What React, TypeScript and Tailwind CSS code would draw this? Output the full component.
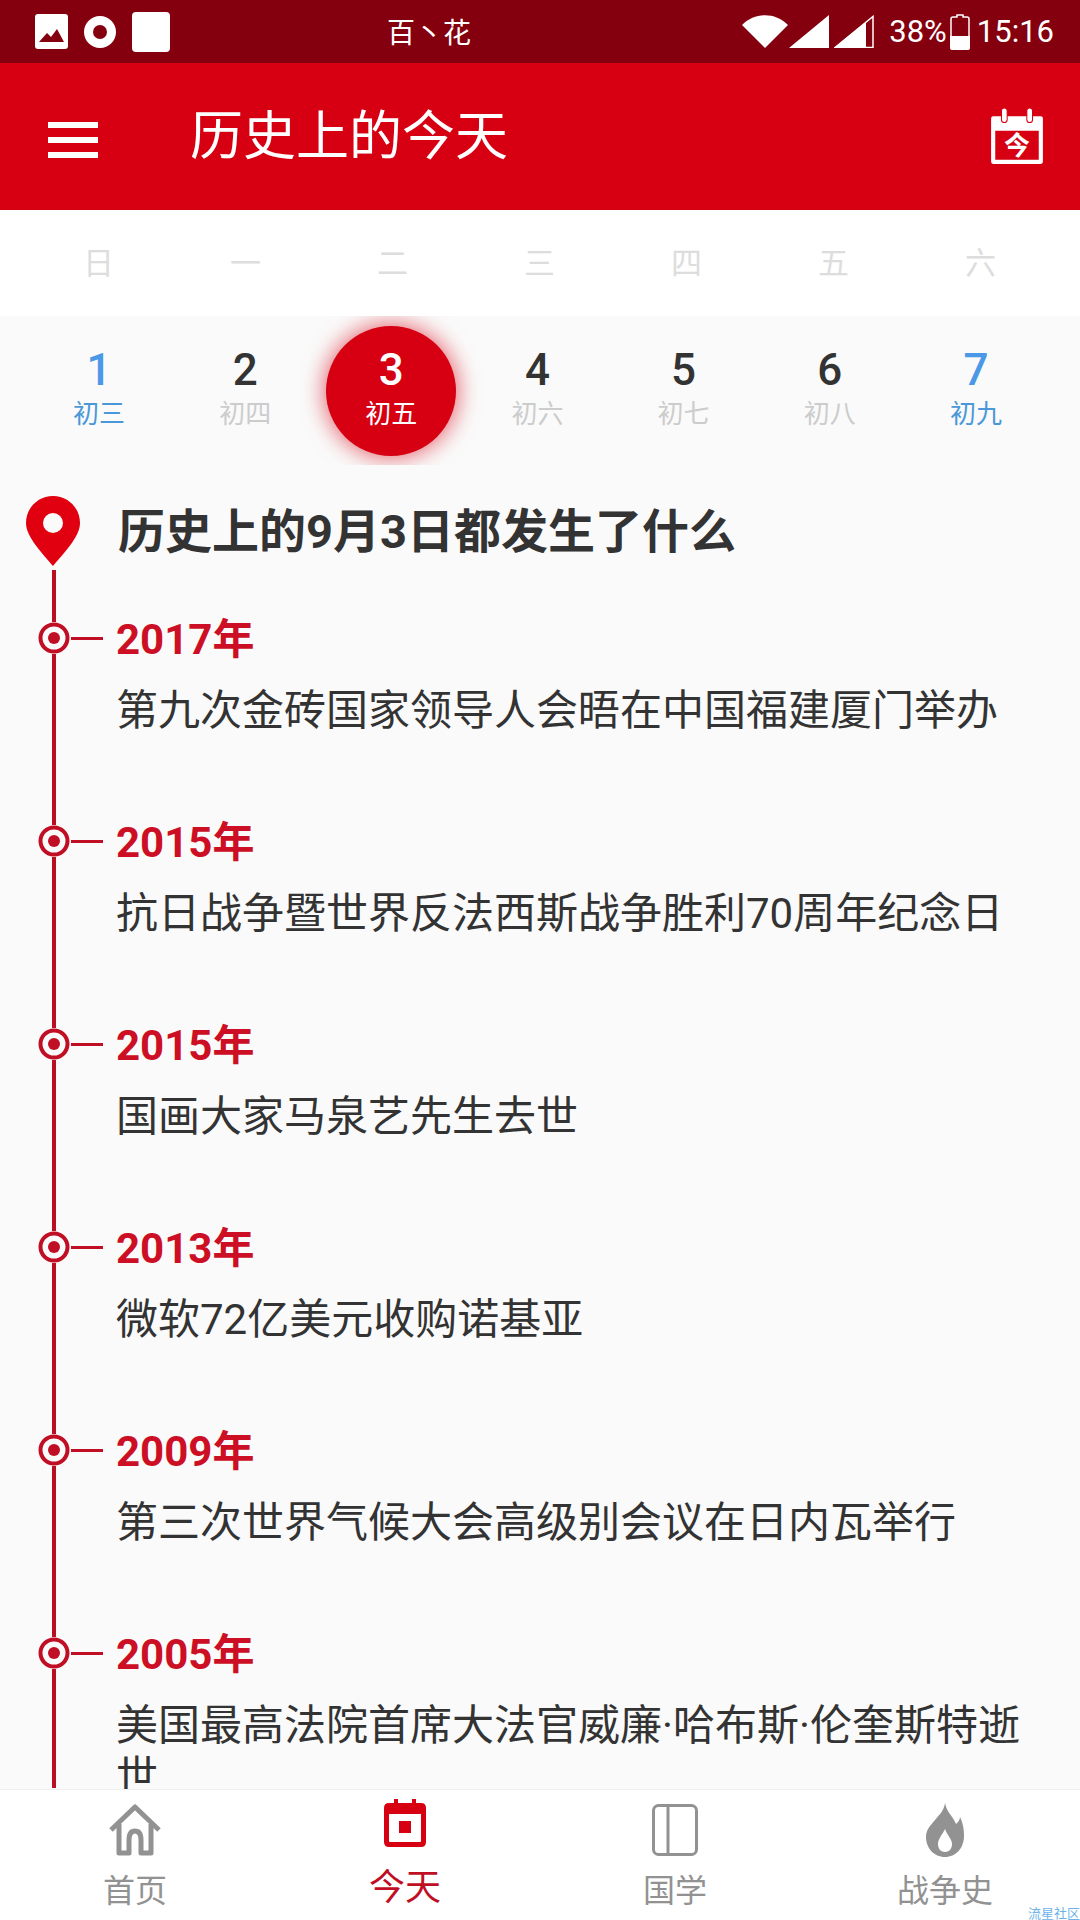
const weekdays = ["日", "一", "二", "三", "四", "五", "六"];

const days = [
  { day: "1", lunar: "初三", weekend: true },
  { day: "2", lunar: "初四" },
  { day: "3", lunar: "初五", active: true },
  { day: "4", lunar: "初六" },
  { day: "5", lunar: "初七" },
  { day: "6", lunar: "初八" },
  { day: "7", lunar: "初九", weekend: true },
];

const events = [
  { year: "2017年", text: "第九次金砖国家领导人会晤在中国福建厦门举办" },
  { year: "2015年", text: "抗日战争暨世界反法西斯战争胜利70周年纪念日" },
  { year: "2015年", text: "国画大家马泉艺先生去世" },
  { year: "2013年", text: "微软72亿美元收购诺基亚" },
  { year: "2009年", text: "第三次世界气候大会高级别会议在日内瓦举行" },
  { year: "2005年", text: "美国最高法院首席大法官威廉·哈布斯·伦奎斯特逝世" },
];

function StatusBar() {
  return (
    <div className="flex h-[63px] shrink-0 items-center bg-[#85000e] pl-[35px] pr-[26px] text-white">
      <div className="flex w-[352px] items-center">
        <svg width="33" height="35" viewBox="0 0 33 35" className="shrink-0">
          <rect width="33" height="35" rx="3" fill="#fff" />
          <path d="M4 28 L12 19 L16 23 L22 15 L29 28 Z" fill="#85000e" />
        </svg>
        <svg width="32" height="32" viewBox="0 0 32 32" className="ml-[16px] shrink-0">
          <circle cx="16" cy="16" r="11.5" fill="none" stroke="#fff" strokeWidth="9" />
        </svg>
        <div className="ml-[16px] h-[40px] w-[38px] shrink-0 rounded-[4px] bg-white" />
      </div>
      <div className="mt-[4px] text-[28px] leading-none">百丶花</div>
      <div className="flex-1" />
      <svg width="46" height="33" viewBox="0 0 46 33" className="shrink-0">
        <path d="M0 10 C13 -3 33 -3 46 10 L23 33 Z" fill="#fff" />
      </svg>
      <svg width="40" height="33" viewBox="0 0 40 33" className="ml-[1px] shrink-0">
        <path d="M0 33 L40 0 L40 33 Z" fill="#fff" />
      </svg>
      <svg width="40" height="33" viewBox="0 0 40 33" className="ml-[5px] shrink-0">
        <path d="M0 33 L32 7 L32 33 Z" fill="#fff" />
        <path d="M1 32.5 L39 1.5 L39 32.5 Z" fill="none" stroke="#fff" strokeWidth="1.5" />
      </svg>
      <div className="ml-[15px] text-[31px] leading-none">38%</div>
      <svg width="20" height="36" viewBox="0 0 20 36" className="ml-[3px] shrink-0">
        <path d="M7 1 H13 V3 H17 Q19 3 19 5 V33 Q19 35 17 35 H3 Q1 35 1 33 V5 Q1 3 3 3 H7 Z" fill="none" stroke="#fff" strokeWidth="1.5" />
        <path d="M0 22 H20 V34 Q20 36 18 36 H2 Q0 36 0 34 Z" fill="#fff" />
      </svg>
      <div className="ml-[7px] text-[31px] leading-none">15:16</div>
    </div>
  );
}

function AppBar() {
  return (
    <div className="flex h-[147px] shrink-0 items-center bg-[#d60012] pl-[48px] pr-[36px] pt-[6px] text-white">
      <div className="flex w-[50px] flex-col gap-[9px]">
        <div className="h-[6px] bg-white" />
        <div className="h-[6px] bg-white" />
        <div className="h-[6px] bg-white" />
      </div>
      <div className="ml-[92px] -mt-[5px] flex-1 text-[53px] leading-none">历史上的今天</div>
      <svg width="54" height="58" viewBox="0 0 52 56" className="-mt-[5px] shrink-0">
        <path d="M3 8 H49 Q51 8 51 10 V52 Q51 54 49 54 H3 Q1 54 1 52 V10 Q1 8 3 8 Z M5 22 V50 H47 V22 Z" fill="#fff" fillRule="evenodd" />
        <rect x="11" y="0" width="5.5" height="14" rx="2.75" fill="#fff" stroke="#d60012" strokeWidth="1" />
        <rect x="35.5" y="0" width="5.5" height="14" rx="2.75" fill="#fff" stroke="#d60012" strokeWidth="1" />
        <text x="26" y="45" textAnchor="middle" fontSize="25" fontWeight="700" fill="#fff">今</text>
      </svg>
    </div>
  );
}

function CalendarStrip() {
  return (
    <>
      <div className="grid h-[106px] shrink-0 grid-cols-7 items-center bg-white pl-[25px] pr-[26px]">
        {weekdays.map((w) => (
          <div key={w} className="text-center text-[31px] leading-none text-[#dddddd]">
            {w}
          </div>
        ))}
      </div>
      <div className="grid h-[149px] shrink-0 grid-cols-7 items-center overflow-hidden bg-[#fafafa] pl-[26px] pr-[31px]">
        {days.map((d) => (
          <div key={d.day} className="flex justify-center">
            <div
              className={
                d.active
                  ? "flex h-[130px] w-[130px] flex-col items-center justify-center rounded-full bg-[#d60012] text-white shadow-[0_0_22px_2px_rgba(214,0,18,0.6)]"
                  : "flex h-[130px] w-[130px] flex-col items-center justify-center"
              }
            >
              <div
                className={
                  d.active
                    ? "text-[44px] font-medium leading-[46px] text-white"
                    : d.weekend
                      ? "text-[44px] font-medium leading-[46px] text-[#4a98e6]"
                      : "text-[44px] font-medium leading-[46px] text-[#333333]"
                }
              >
                {d.day}
              </div>
              <div
                className={
                  d.active
                    ? "mt-[6px] mb-[6px] text-[26px] leading-[30px] text-white"
                    : d.weekend
                      ? "mt-[6px] mb-[6px] text-[26px] leading-[30px] text-[#4a98d8]"
                      : "mt-[6px] mb-[6px] text-[26px] leading-[30px] text-[#cccccc]"
                }
              >
                {d.lunar}
              </div>
            </div>
          </div>
        ))}
      </div>
    </>
  );
}

function TimelineRow({ year, text }: { year: string; text: string }) {
  return (
    <div className="flex h-[203px] shrink-0">
      <div className="flex w-[116px] shrink-0">
        <div className="ml-[38px] flex w-[32px] flex-col items-center">
          <div className="h-[52px] w-[4px] bg-[#b90e24]" />
          <svg width="32" height="32" viewBox="0 0 32 32" className="shrink-0">
            <circle cx="16" cy="16" r="13.5" fill="none" stroke="#c00f25" strokeWidth="4" />
            <circle cx="16" cy="16" r="6" fill="#c00f25" />
          </svg>
          <div className="w-[4px] flex-1 bg-[#b90e24]" />
        </div>
        <div className="ml-[1px] mt-[67px] h-[3px] w-[32px] bg-[#c00f25]" />
      </div>
      <div className="min-w-0 flex-1 pr-[42px] pt-[45px]">
        <div className="text-[42px] font-bold leading-[50px] text-[#cc0f24]">{year}</div>
        <div className="mt-[20px] text-[42px] leading-[51px] text-[#333333]">{text}</div>
      </div>
    </div>
  );
}

function BottomNav() {
  return (
    <div className="grid h-[131px] shrink-0 grid-cols-4 border-t border-[#f0f0f0] bg-white">
      <div className="flex flex-col items-center pt-[14px]">
        <svg width="56" height="52" viewBox="0 0 54 52" className="shrink-0">
          <path
            d="M3 26 L27 3 L51 26 M11 20 V49 H21 V36 Q21 27 27 27 Q33 27 33 36 V49 H43 V20"
            fill="none"
            stroke="#929292"
            strokeWidth="5"
            strokeLinejoin="round"
          />
        </svg>
        <div className="mt-[16px] text-[32px] leading-[38px] text-[#929292]">首页</div>
      </div>
      <div className="flex flex-col items-center pt-[9px]">
        <svg width="46" height="50" viewBox="0 0 44 50" className="shrink-0">
          <path d="M11 0 H15 V4 H29 V0 H33 V4 H38 Q43 4 43 9 V43 Q43 48 38 48 H6 Q1 48 1 43 V9 Q1 4 6 4 H11 Z M6 15 V42 Q6 43 7 43 H37 Q38 43 38 42 V15 Z" fill="#d60012" fillRule="evenodd" />
          <rect x="16" y="22" width="12" height="12" fill="#d60012" />
        </svg>
        <div className="mt-[18px] text-[36px] leading-[42px] text-[#c00f25]">今天</div>
      </div>
      <div className="flex flex-col items-center pt-[14px]">
        <svg width="46" height="52" viewBox="0 0 46 52" className="shrink-0">
          <rect x="1.5" y="1.5" width="43" height="49" rx="5" fill="none" stroke="#929292" strokeWidth="3" />
          <path d="M16 2 V50" stroke="#929292" strokeWidth="3" />
        </svg>
        <div className="mt-[16px] text-[32px] leading-[38px] text-[#929292]">国学</div>
      </div>
      <div className="flex flex-col items-center pt-[13px]">
        <svg width="38" height="54" viewBox="0 0 38 54" className="shrink-0">
          <path
            fillRule="evenodd"
            fill="#929292"
            d="M19 0 C21 10 27 13 30 21 C32 19 34 17 34 14 C37 20 38 26 38 33 C38 45 30 54 19 54 C8 54 0 45 0 34 C0 26 5 22 9 17 C13 12 18 8 19 0 Z M19 26 C16 32 12 36 12 41 C12 46 15 49 19 49 C23 49 26 46 26 41 C26 36 21 32 19 26 Z"
          />
        </svg>
        <div className="mt-[15px] text-[32px] leading-[38px] text-[#929292]">战争史</div>
      </div>
    </div>
  );
}

export default function App() {
  return (
    <div className="relative flex h-[1920px] w-[1080px] flex-col overflow-hidden bg-[#fafafa] [font-family:Roboto,'Noto_Sans_CJK_SC',sans-serif]">
      <StatusBar />
      <AppBar />
      <CalendarStrip />

      <div className="flex min-h-0 flex-1 flex-col overflow-hidden">
        <div className="flex h-[105px] shrink-0 items-start pl-[26px] pt-[31px]">
          <svg width="54" height="70" viewBox="0 0 54 70" className="shrink-0">
            <path
              fillRule="evenodd"
              fill="#e0000f"
              d="M27 0 C42 0 54 12 54 27 C54 41 37 58 27 70 C17 58 0 41 0 27 C0 12 12 0 27 0 Z M27 17 A10 10 0 1 0 27 37 A10 10 0 1 0 27 17 Z"
            />
          </svg>
          <div className="ml-[38px] mt-[8px] text-[47px] font-bold leading-[56px] text-[#333333]">
            历史上的9月3日都发生了什么
          </div>
        </div>
        {events.map((e) => (
          <TimelineRow key={e.year + e.text} year={e.year} text={e.text} />
        ))}
      </div>

      <BottomNav />

      <div className="absolute bottom-0 right-0 text-[13px] leading-[13px] text-[#6db3ea]">流星社区</div>
    </div>
  );
}
